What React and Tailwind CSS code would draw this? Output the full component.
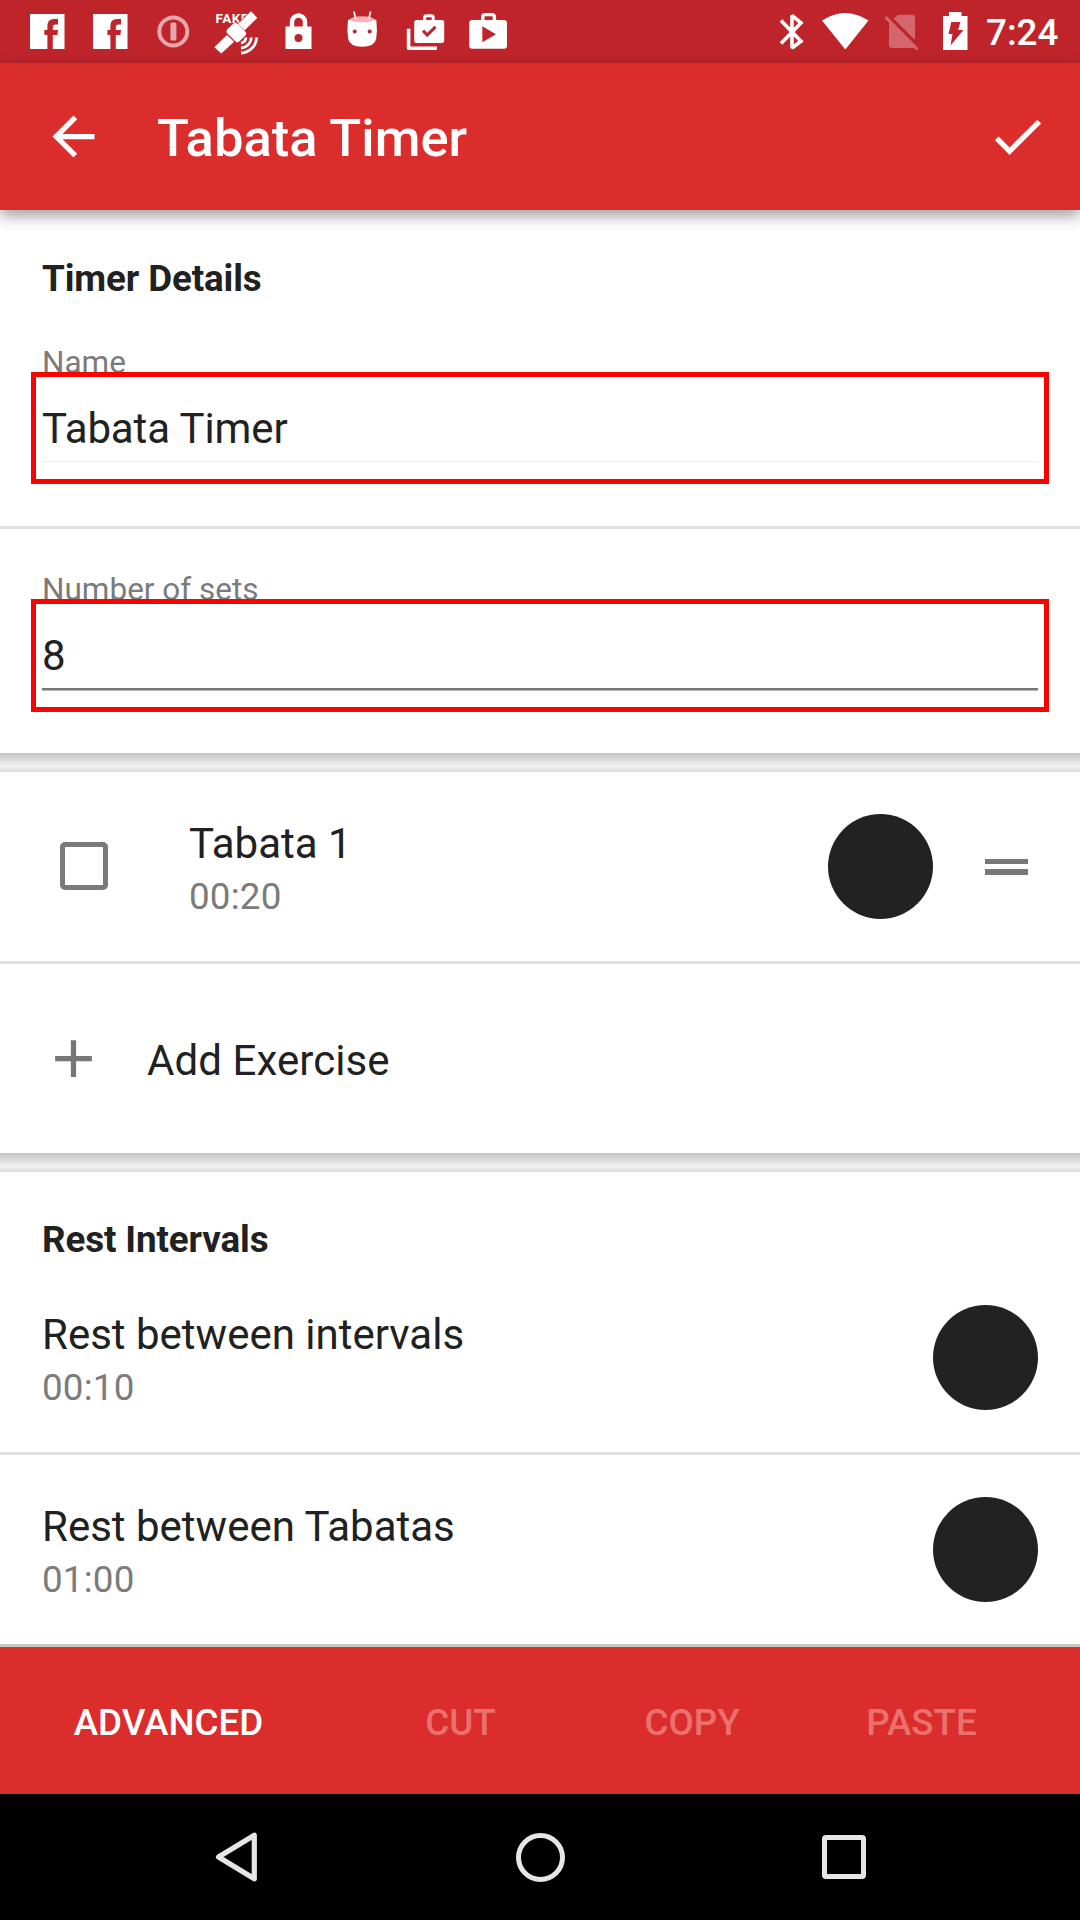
import React from "react";

function Slot({ children }) {
  return (
    <svg width="63" height="63" viewBox="0 0 63 63" className="block shrink-0" fill="#fff">
      {children}
    </svg>
  );
}

function FacebookIcon() {
  return (
    <Slot>
      <path d="M14 14H48.5V49H36.8V35H41.4L42 30H36.8V27Q36.8 24.5 39.4 24.5H42V19H38Q31.4 19 31.4 26V30H28.4V35H31.4V49H14Z" />
    </Slot>
  );
}

function StatusBar() {
  return (
    <div className="flex h-[63px] items-center bg-[#bf242b] pl-4">
      <FacebookIcon />
      <FacebookIcon />
      {/* info */}
      <Slot>
        <g opacity="0.6">
          <circle cx="31.3" cy="31.5" r="14" fill="none" stroke="#fff" strokeWidth="4" />
          <rect x="28.4" y="22.5" width="6" height="18" rx="1.5" />
        </g>
      </Slot>
      {/* fake location satellite */}
      <Slot>
        <text x="10.5" y="23" fontFamily="Roboto, sans-serif" fontWeight="700" fontSize="13.5" letterSpacing="0.5">FAKE</text>
        <path d="M46 11.3L52.3 17.8L39.6 30.6L32.9 24Z" stroke="#bf242b" strokeWidth="1.2" />
        <path d="M46 11.3L52.3 17.8L39.6 30.6L32.9 24Z" />
        <rect x="22.8" y="25.5" width="17" height="14" rx="3" transform="rotate(45 31.3 32.5)" />
        <path d="M9.3 47.2L22 35L29 41.7L16.3 53.6Z" />
        <path d="M41 37.5A6 6 0 0 1 36 43M46.3 37.5A11 11 0 0 1 36 48M51.6 37.5A16 16 0 0 1 36 53" fill="none" stroke="#fff" strokeWidth="2.8" />
      </Slot>
      {/* padlock */}
      <Slot>
        <path fillRule="evenodd" d="M17.5 26.5H43.5V49H17.5ZM30.5 34A4 4 0 1 0 30.5 42A4 4 0 1 0 30.5 34Z" />
        <path d="M24 28V22A6.5 6.5 0 0 1 37 22V28" fill="none" stroke="#fff" strokeWidth="4.4" />
      </Slot>
      {/* android head */}
      <Slot>
        <path d="M17 20Q31 14 45.3 20Q46.6 30 45.2 39Q43.5 46.7 31.2 46.7Q18.8 46.7 17.2 39Q15.7 30 17 20Z" />
        <ellipse cx="31" cy="19.3" rx="12" ry="3" fill="#f4b3b8" />
        <path d="M24.5 18.5L23 11.5M38 18.5L39.5 11.5" stroke="#fff" strokeWidth="1.7" />
        <circle cx="23.7" cy="31.5" r="2" fill="#bf242b" />
        <circle cx="38.7" cy="31.5" r="2" fill="#bf242b" />
      </Slot>
      {/* installed apps */}
      <Slot>
        <rect x="20.2" y="20" width="30" height="23" rx="2.5" />
        <path d="M30.6 21V17.5Q30.6 15.7 32.4 15.7H37.4Q39.2 15.7 39.2 17.5V21" fill="none" stroke="#fff" strokeWidth="3" />
        <path d="M14.6 28.8V48.3H43" fill="none" stroke="#fff" strokeWidth="3.6" strokeLinejoin="round" />
        <path d="M29 30.6L33.2 35L41.5 26.7" fill="none" stroke="#bf242b" strokeWidth="3" />
      </Slot>
      {/* play store */}
      <Slot>
        <rect x="12.2" y="20" width="37.8" height="28.8" rx="3" />
        <path d="M25.8 21V17Q25.8 14.6 28.2 14.6H35Q37.4 14.6 37.4 17V21" fill="none" stroke="#fff" strokeWidth="3.4" />
        <path d="M25.3 26.3L39 34.3L25.3 42.2Z" fill="#bf242b" />
      </Slot>

      <div className="ml-64 flex items-center">
        <svg width="40" height="63" viewBox="776 0 40 63" fill="none" stroke="#fff" strokeWidth="3.6">
          <path d="M781 20.5L801 41.2L792 48V15.5L801 22.8L781 43.5" strokeLinejoin="miter" strokeMiterlimit="2" />
        </svg>
        <svg width="60" height="63" viewBox="816 0 60 63" fill="#fff">
          <path d="M822 20.5Q845.3 5.5 868.5 20.5L845.3 49.5Z" />
        </svg>
        <svg width="50" height="63" viewBox="876 0 50 63">
          <path d="M889 23L898 14.7H912Q915 14.7 915 17.7V45Q915 48 912 48H892Q889 48 889 45Z" fill="#d4676e" />
          <path d="M887.5 15L919.5 47" stroke="#bf242b" strokeWidth="3.6" />
          <path d="M885.5 17L917.5 49.5" stroke="#d4676e" strokeWidth="2.8" />
        </svg>
        <svg width="50" height="63" viewBox="926 0 50 63">
          <path d="M943 16H949V12H961.5V16H967.5V50H943Z" fill="#fff" />
          <path d="M951.3 22L960.5 22L958 30H963.5L950.5 45.5L952.5 34H948.5Z" fill="#bf242b" />
        </svg>
        <span className="ml-2.5 pt-0.5 text-[36.75px] leading-[63px] font-medium text-white">7:24</span>
      </div>
    </div>
  );
}

function AppBar() {
  return (
    <header className="relative z-10 flex h-[147px] items-center bg-[#da2d2c] shadow-[0_6px_14px_rgba(0,0,0,0.38)]">
      <svg width="63" height="63" viewBox="0 0 24 24" fill="#fff" className="ml-[42px]">
        <path d="M20 11H7.83l5.59-5.59L12 4l-8 8 8 8 1.41-1.41L7.83 13H20v-2z" />
      </svg>
      <h1 className="ml-[52px] pt-[3px] text-[52.5px] leading-[64px] font-medium text-white">Tabata Timer</h1>
      <svg width="63" height="63" viewBox="0 0 24 24" fill="#fff" className="mr-[31px] ml-auto">
        <path d="M9 16.17L4.83 12l-1.42 1.41L9 19 21 7l-1.41-1.41z" />
      </svg>
    </header>
  );
}

function Field({ label, value, boxClass, lineClass }) {
  return (
    <>
      <div className="ml-[42px] h-7 text-[31.5px] leading-[37px] text-[#7b7b7b]">{label}</div>
      <div className={"relative mr-[31px] ml-[31px] border-[5px] border-[#f80502] bg-white px-1.5 " + boxClass}>
        <div className="h-[84px] text-[42px] leading-[104px] tracking-[-0.1px]">{value}</div>
        <div className={lineClass} />
      </div>
    </>
  );
}

function Dot() {
  return <div className="size-[105px] shrink-0 rounded-full bg-[#222]" />;
}

function TwoLine({ title, time }) {
  return (
    <div className="flex-1 pt-2">
      <div className="text-[42px] leading-[50px]">{title}</div>
      <div className="mt-[3px] text-[36.75px] leading-[50px] tracking-[0.2px] text-[#7b7b7b]">{time}</div>
    </div>
  );
}

function Gap() {
  return <div className="h-[19px] bg-linear-to-b from-[#c4c4c4] via-[#f2f2f2] via-70% to-[#dcdcdc]" />;
}

function Divider() {
  return <div className="h-[3px] bg-[#e0e0e0]" />;
}

const ACTIONS = [
  { label: "ADVANCED", cls: "w-[337px] text-white" },
  { label: "CUT", cls: "w-[247px] text-[#eb716f]" },
  { label: "COPY", cls: "w-[216px] text-[#eb716f]" },
  { label: "PASTE", cls: "w-[243px] text-[#eb716f]" },
];

export default function App() {
  return (
    <div className="flex h-[1920px] w-[1080px] flex-col overflow-hidden bg-white font-['Roboto',sans-serif] text-[#212121]">
      <StatusBar />
      <AppBar />

      <main className="h-[1437px]">
        <section className="h-[316px] pt-[47px]">
          <h2 className="mb-[43px] ml-[42px] text-[36.75px] leading-[44px] font-bold tracking-[-0.1px]">Timer Details</h2>
          <Field label="Name" value="Tabata Timer" boxClass="h-[112px]" lineClass="h-px bg-[#eeeeee]" />
        </section>
        <Divider />
        <section className="h-[224px] pt-[42px]">
          <Field label="Number of sets" value="8" boxClass="h-[113px]" lineClass="h-[3px] border-b border-[#b8b8b8] bg-[#777]" />
        </section>
        <Gap />

        <section className="flex h-[189px] items-center">
          <div className="mb-px ml-[60px] size-12 rounded-[5px] border-[5px] border-[#7a7a7a]" />
          <div className="ml-[81px] flex flex-1 items-center">
            <TwoLine title="Tabata 1" time="00:20" />
            <Dot />
          </div>
          <div className="mr-[52px] ml-[52px] flex w-[43px] flex-col gap-[5px]">
            <div className="h-[5.5px] bg-[#777]" />
            <div className="h-[5.5px] bg-[#777]" />
          </div>
        </section>
        <Divider />
        <section className="flex h-[189px] items-center">
          <svg width="63" height="63" viewBox="0 0 24 24" fill="#777" className="ml-[42px]">
            <path d="M19 13h-6v6h-2v-6H5v-2h6V5h2v6h6v2z" />
          </svg>
          <div className="ml-[42px] pt-1 text-[42px] leading-[50px] tracking-[0.08px]">Add Exercise</div>
        </section>
        <Gap />

        <section className="px-[42px] pt-[46px]">
          <h2 className="text-[36.75px] leading-[44px] font-bold tracking-[-0.1px]">Rest Intervals</h2>
          <div className="flex h-[190px] items-center">
            <TwoLine title="Rest between intervals" time="00:10" />
            <Dot />
          </div>
        </section>
        <Divider />
        <section className="flex h-[189px] items-center px-[42px]">
          <TwoLine title="Rest between Tabatas" time="01:00" />
          <Dot />
        </section>
        <div className="h-[3px] bg-[#c8c8c4]" />
      </main>

      <div className="flex h-[147px] items-center bg-[#da2d2c] pt-1 text-[36.75px] leading-[44px] font-medium">
        {ACTIONS.map((a) => (
          <div key={a.label} className={"text-center " + a.cls}>{a.label}</div>
        ))}
      </div>

      <nav className="flex h-[126px] items-center bg-black">
        <svg width="50" height="54" viewBox="0 0 50 54" fill="none" stroke="#e6e6e6" strokeWidth="5.2" strokeLinejoin="round" className="ml-[211px]">
          <path d="M7.5 27L43.3 5.2V48.8Z" />
        </svg>
        <div className="ml-[255px] size-[49px] rounded-full border-[5.5px] border-[#e6e6e6]" />
        <div className="ml-[257px] size-[44px] rounded-[4px] border-[5px] border-[#e6e6e6]" />
      </nav>
    </div>
  );
}
